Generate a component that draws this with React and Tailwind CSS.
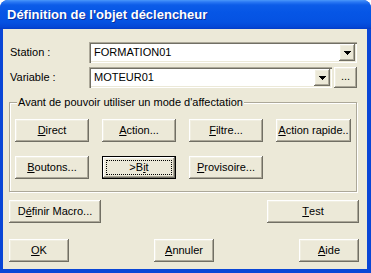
import React from "react";

const raised =
  "bg-[#ece9d8] shadow-[inset_-1px_-1px_0_#716f64,inset_1px_1px_0_#ffffff,inset_-2px_-2px_0_#aca899,inset_2px_2px_0_#f1efe2]";

function Btn({ children, className = "", def = false }) {
  if (def) {
    return (
      <div className={`${className} relative h-[23px] border border-black`}>
        <div className={`h-full flex items-center justify-center ${raised}`}>
          {children}
        </div>
        <div className="absolute inset-[3px] border border-dotted border-black" />
      </div>
    );
  }
  return (
    <div className={`${className} h-[23px] flex items-center justify-center ${raised}`}>
      {children}
    </div>
  );
}

function U({ children }) {
  return <span className="underline underline-offset-[1px] decoration-1">{children}</span>;
}

function Arrow() {
  return (
    <svg width="7" height="4" viewBox="0 0 7 4" shapeRendering="crispEdges">
      <path d="M0 0H7L3.5 4Z" fill="#000" />
    </svg>
  );
}

function Combo({ value, className = "" }) {
  return (
    <div
      className={`${className} h-[21px] flex items-stretch bg-white p-[2px] shadow-[inset_1px_1px_0_#aca899,inset_2px_2px_0_#716f64,inset_-1px_-1px_0_#ffffff,inset_-2px_-2px_0_#ece9d8]`}
    >
      <div className="flex-1 flex items-center pl-[3px]">{value}</div>
      <div className={`w-[16px] flex items-center justify-center ${raised}`}>
        <Arrow />
      </div>
    </div>
  );
}

export default function App() {
  return (
    <div className="w-[371px] h-[273px] flex flex-col bg-[#0a46d6] rounded-t-[8px] overflow-hidden font-['Liberation_Sans',Arial,sans-serif] text-[11px] text-black leading-[13px]">
      <div className="h-[29px] shrink-0 flex items-center pl-[7px] bg-[linear-gradient(to_bottom,#4a98fa_0px,#2a78f4_2px,#0c5ce8_5px,#0656e6_12px,#0552e2_22px,#0447d6_27px,#033cc6_29px)] text-white font-bold text-[13px] [text-shadow:1px_1px_0_#0b2f9c]">
        Définition de l'objet déclencheur
      </div>
      <div className="flex-1 ml-[3px] mr-[4px] mb-[4px] bg-[#ece9d8] flex flex-col pt-[13px]">
        <div className="flex items-center">
          <div className="w-[86px] pl-[7px]">Station :</div>
          <Combo value="FORMATION01" className="w-[268px]" />
        </div>
        <div className="flex items-center mt-[4px]">
          <div className="w-[86px] pl-[7px]">Variable :</div>
          <Combo value="MOTEUR01" className="w-[243px]" />
          <div className={`ml-[2px] w-[23px] h-[21px] flex items-center justify-center pb-[2px] ${raised}`}>
            ...
          </div>
        </div>
        <div className="relative ml-[6px] mt-[14px] w-[348px] h-[90px] border border-[#aca899] shadow-[1px_1px_0_#ffffff,inset_1px_1px_0_#ffffff] pt-[16px] pl-[5px]">
          <div className="absolute left-[7px] -top-[7px] px-[1px] bg-[#ece9d8]">
            Avant de pouvoir utiliser un mode d'affectation
          </div>
          <div className="flex gap-[13px]">
            <Btn className="w-[74px]"><U>D</U>irect</Btn>
            <Btn className="w-[74px]"><U>A</U>ction...</Btn>
            <Btn className="w-[74px]"><U>F</U>iltre...</Btn>
            <Btn className="w-[75px]"><U>A</U>ction rapide..</Btn>
          </div>
          <div className="flex gap-[13px] mt-[14px]">
            <Btn className="w-[74px]"><U>B</U>outons...</Btn>
            <Btn className="w-[74px]" def>&gt;B<U>i</U>t</Btn>
            <Btn className="w-[74px]"><U>P</U>rovisoire...</Btn>
          </div>
        </div>
        <div className="flex justify-between ml-[6px] mr-[8px] mt-[8px]">
          <Btn className="w-[92px]">D<U>é</U>finir Macro...</Btn>
          <Btn className="w-[92px]"><U>T</U>est</Btn>
        </div>
        <div className="flex justify-between ml-[6px] mr-[8px] mt-[16px]">
          <Btn className="w-[60px]"><U>O</U>K</Btn>
          <Btn className="w-[60px]"><U>A</U>nnuler</Btn>
          <Btn className="w-[60px]"><U>A</U>ide</Btn>
        </div>
      </div>
    </div>
  );
}
